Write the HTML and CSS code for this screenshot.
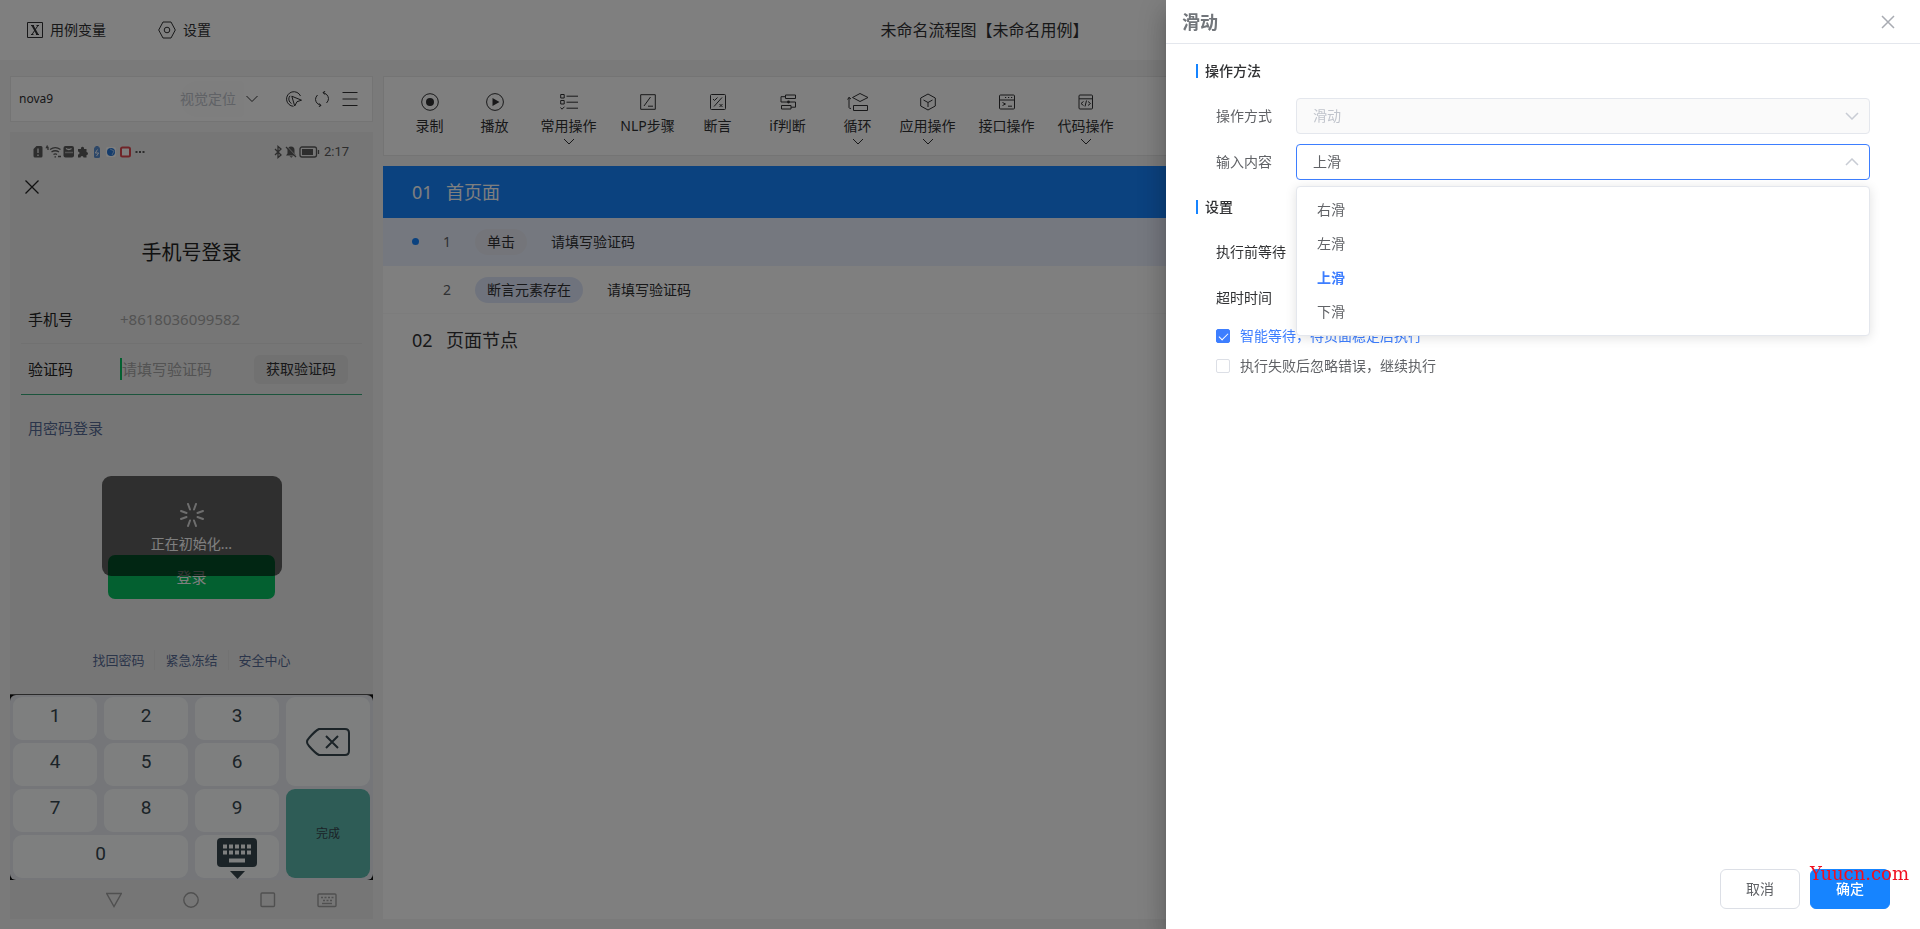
FILE: index.html
```html
<!DOCTYPE html>
<html lang="zh-CN">
<head>
<meta charset="utf-8">
<meta name="viewport" content="width=device-width, initial-scale=1">
<title>未命名流程图</title>
<link rel="stylesheet" href="styles.css">
</head>
<body>
<div class="app">
  <header class="topbar">
    <nav class="topbar-nav">
      <button class="nav-btn" type="button">
        <svg class="nav-icon nav-icon-x" viewBox="0 0 16 16"><path d="M.5.5h15v15H.5zM4 3.500h3M9.500 3.500h2.500M4 12.500h2.500M9 12.500h3M11 3.500l-6 9"/><path class="bold" d="M5.500 3.500l5 9"/></svg>
        用例变量
      </button>
      <button class="nav-btn" type="button">
        <svg class="nav-icon" viewBox="0 0 18 18"><path d="M5 1h8l4.300 8L13 17H5L.7 9z"/><circle cx="9" cy="9" r="2.800"/></svg>
        设置
      </button>
    </nav>
    <h1 class="topbar-title">未命名流程图【未命名用例】</h1>
  </header>

  <main class="workspace">
    <section class="device">
      <div class="device-bar">
        <span class="device-name">nova9</span>
        <button class="locate" type="button" disabled>视觉定位</button>
        <svg class="locate-arrow" viewBox="0 0 12 8"><path d="M.5 1L6 6.500 11.500 1"/></svg>
        <button class="bar-btn" type="button" aria-label="点选"><svg viewBox="0 0 16 16"><path d="M7.500 15.300A7.300 7.300 0 1 1 14.500 5"/><path d="M5.500 12.500A5 5 0 0 1 4 4.800"/><path d="M5.800 5.200l9.700 4-4.500 1.500-2.300 4.300z"/></svg></button>
        <button class="bar-btn" type="button" aria-label="刷新"><svg viewBox="0 0 16 16"><path d="M7 14.500Q2 13 1.500 8.500 1.500 6 3.500 4M9 1.500Q14 3 14.500 7.500 14.500 10 12.500 12"/><path d="M5 12.300l2 2.200-2.200 1.200M11 3.700L9 1.500 11.200.3"/></svg></button>
        <button class="bar-btn" type="button" aria-label="菜单"><svg viewBox="0 0 16 16"><path d="M.5 1.500h15M.5 8h15M.5 14.500h15"/></svg></button>
      </div>

      <div class="phone">
        <div class="status">
          <svg class="status-left" viewBox="0 0 112 14">
            <path class="g" d="M3.500 1H8a1.500 1.500 0 0 1 1.500 1.500v8.500A1.500 1.500 0 0 1 8 12.500H2A1.500 1.500 0 0 1 .5 11V4z"/>
            <path class="hole" d="M5 3.500V8M5 9.500V11"/>
            <path class="gs" d="M17 4.500c3.500-2.500 7-2.500 10.500 0M18.500 7c2.500-1.700 5-1.700 7.500 0M20.500 9.500c1-.8 2.500-.8 3.500 0M21.500 11.800h1.500M25 11.500h3M14.500.5l-1 2h1.500v2.500"/>
            <rect class="g" x="30.500" y="1" width="10.500" height="11.500" rx="2"/><path class="hole" d="M33 3.500q3 2 5.500 0"/><path class="hole dots" d="M32.500 7.500h7"/>
            <path class="g" d="M45 4h3a1.600 1.600 0 1 1 3 0h2.500v3a1.500 1.500 0 1 1 0 3v2.500h-3a1.500 1.500 0 0 0-3 0H45V9.500a1.500 1.500 0 0 0 0-3z"/>
            <rect class="cell" x="61" y="2" width="6" height="11" rx="1.500"/><path class="cell" d="M62.500 1h3v1h-3z"/><path class="bolt" d="M64.500 4.500L62.300 8h3.400L63.500 11"/>
            <rect class="tile" x="73" y="2" width="10" height="10" rx="2"/><circle class="dot" cx="78" cy="7" r="4"/><path class="thin" d="M77 4l4 2-2 4"/>
            <rect class="redbox" x="88" y="2.500" width="9" height="9" rx="1.500"/>
            <path class="gd" d="M102.500 7h2M106 7h2M109.500 7h2"/>
          </svg>
          <span class="status-right">
            <svg class="status-icons" viewBox="0 0 46 14">
              <path class="gs" d="M1 4l6 6-3 2.500V1.500L7 4l-6 6"/>
              <path class="g" d="M12 10.500l1.500-2V5a3.500 3.500 0 0 1 7 0v3.500l1.500 2zM15.500 11.300h3.500l-1.700 1.500z"/><path class="slit" d="M13 1.500l9.500 10"/><path class="cut" d="M12 2l10 10"/>
              <rect class="gs" x="26" y="2" width="16.500" height="10" rx="2"/><rect class="g" x="28" y="4" width="11" height="6"/><path class="gs" d="M44.500 5v4"/>
            </svg>
            2:17
          </span>
        </div>
        <button class="phone-close" type="button" aria-label="关闭"><svg viewBox="0 0 14 14"><path d="M.5.5l13 13M13.500.5l-13 13"/></svg></button>
        <h2 class="phone-title">手机号登录</h2>
        <form class="login">
          <div class="login-row">
            <label for="tel">手机号</label>
            <input id="tel" type="tel" placeholder="+8618036099582">
          </div>
          <div class="login-row login-row-active">
            <label for="code">验证码</label>
            <input id="code" class="code-input" type="text" placeholder="请填写验证码">
            <button class="get-code" type="button">获取验证码</button>
          </div>
          <a class="pwd-link" href="#">用密码登录</a>
          <div class="submit-wrap">
            <button class="login-btn" type="button">登录</button>
            <div class="toast" role="status">
              <svg class="spinner" viewBox="-12 -12 24 24"><path d="M2-5.500L4-11M5.500-2L11-4M5.500 2L11 4M2 5.500L4 11M-2 5.500L-4 11M-5.500 2L-11 4M-5.500-2L-11-4M-2-5.500L-4-11"/></svg>
              <span>正在初始化...</span>
            </div>
          </div>
        </form>
        <div class="help-links">
          <a href="#">找回密码</a><a href="#">紧急冻结</a><a href="#">安全中心</a>
        </div>
        <div class="keypad-frame">
          <div class="keypad">
            <button type="button">1</button><button type="button">2</button><button type="button">3</button>
            <button class="key-tall key-delete" type="button" aria-label="删除"><svg viewBox="0 0 44 28"><path d="M13 1h26q4 0 4 4v18q0 4-4 4H13Q9 25 3 18Q-1 14 3 10Q9 3 13 1z"/><path d="M20 8l12 12M32 8L20 20"/></svg></button>
            <button type="button">4</button><button type="button">5</button><button type="button">6</button>
            <button type="button">7</button><button type="button">8</button><button type="button">9</button>
            <button class="key-tall key-done" type="button">完成</button>
            <button class="key-wide" type="button">0</button>
            <button class="key-hide" type="button" aria-label="收起键盘"><svg viewBox="0 0 40 41"><rect width="40" height="29" rx="4"/><path d="M13 33h15l-7.500 8z"/><path class="keys" d="M6 8.500h29M6 14.500h29"/><path class="space" d="M12 22.500h16"/></svg></button>
          </div>
        </div>
        <div class="phone-nav">
          <svg viewBox="0 0 16 16"><path d="M.7 1.500h14.600L8 14.500z"/></svg>
          <svg viewBox="0 0 16 16"><circle cx="8" cy="8" r="7.200"/></svg>
          <svg viewBox="0 0 16 16"><rect x="1" y="1" width="13.500" height="13.500" rx="1"/></svg>
          <svg class="nav-kbd" viewBox="0 0 20 16"><rect x="1" y="2" width="18" height="12.500" rx="1"/><path class="dash" d="M4 5.500h12.500M6 8.500h9"/><path d="M5 11.500h10"/></svg>
        </div>
      </div>
    </section>

    <section class="flow">
      <div class="toolbar">
        <button class="tool tool-media" type="button"><svg class="tool-icon" viewBox="0 0 18 18"><circle cx="9" cy="9" r="8.300"/><circle class="fill" cx="9" cy="9" r="4"/></svg>录制</button>
        <button class="tool tool-media" type="button"><svg class="tool-icon" viewBox="0 0 18 18"><circle cx="9" cy="9" r="8.400"/><path class="fill" d="M6.500 5l7 4-7 4z"/></svg>播放</button>
        <button class="tool tool-wide" type="button"><svg class="tool-icon" viewBox="0 0 18 18"><path d="M.7 1.500h3.500V5H.7zM.7 7.500h3.500V11H.7zM.5 14.500l1.500 1.700 2.500-2.500M6.500 3.200H18M6.500 9.200H18M6.500 15.200H18"/></svg>常用操作<svg class="tool-arrow" viewBox="0 0 12 8"><path d="M1 1l5 5 5-5"/></svg></button>
        <button class="tool tool-wide" type="button"><svg class="tool-icon" viewBox="0 0 18 18"><path d="M1.700 1.700h14.600v14.600H1.700zM11.500 4l-6.500 9M9 13.200h5"/></svg>NLP步骤</button>
        <button class="tool" type="button"><svg class="tool-icon" viewBox="0 0 18 18"><rect x="1.500" y="1.500" width="15" height="15" rx="1"/><path d="M13 4.500l-8 9M4 6l1.500 1.500L8.500 4.500M10.500 11l3 3M13.500 11l-3 3"/></svg>断言</button>
        <button class="tool tool-wide" type="button"><svg class="tool-icon" viewBox="0 0 18 18"><path d="M6.500 2h10v3.500h-10zM2.500 12.500h9.500V16H2.500zM6.500 3.700H2V9h14.500v5.200H12"/><circle class="fill" cx="9.500" cy="9" r="1.400"/></svg>if判断</button>
        <button class="tool" type="button"><svg class="tool-icon tool-icon-loop" viewBox="0 0 22 18"><path d="M5.500 4.500l7.500-4 8 4-8 4zM6.500 12.500h14v5H6.500zM2 4v10.500q0 1 2 1M.5 6.500L2 4.500 4 6"/></svg>循环<svg class="tool-arrow" viewBox="0 0 12 8"><path d="M1 1l5 5 5-5"/></svg></button>
        <button class="tool tool-wide" type="button"><svg class="tool-icon" viewBox="0 0 18 18"><path d="M9 1l7.300 4v8L9 17l-7.300-4V5zM4.500 7L9 9.500 13.500 7M9 9.500V14"/></svg>应用操作<svg class="tool-arrow" viewBox="0 0 12 8"><path d="M1 1l5 5 5-5"/></svg></button>
        <button class="tool tool-wide" type="button"><svg class="tool-icon" viewBox="0 0 18 18"><rect x="1.500" y="2" width="15" height="14" rx="1"/><path d="M1.500 7h15M7 4.500h1.200M10 4.500h1.200M13 4.500h1.200M4.500 9.500L7.500 11l-3 1.500M10 13.200h4"/></svg>接口操作</button>
        <button class="tool tool-wide" type="button"><svg class="tool-icon" viewBox="0 0 18 18"><rect x="2" y="2" width="13.500" height="14" rx="1"/><path d="M2 5.800h13.500M6.500 8.500l-2.500 2 2.500 2M11 8.500l2.500 2-2.500 2M9.500 7.500l-1.500 6"/></svg>代码操作<svg class="tool-arrow" viewBox="0 0 12 8"><path d="M1 1l5 5 5-5"/></svg></button>
      </div>
      <div class="steps">
        <div class="node node-active"><span class="node-no">01</span><span>首页面</span></div>
        <div class="step step-active"><span class="marker"><i class="bullet"></i></span><span class="step-no">1</span><span class="tag tag-plain">单击</span><span>请填写验证码</span></div>
        <div class="step"><span class="marker"></span><span class="step-no">2</span><span class="tag">断言元素存在</span><span>请填写验证码</span></div>
        <div class="node"><span class="node-no">02</span><span>页面节点</span></div>
      </div>
    </section>
  </main>
</div>

<div class="mask">
  <aside class="drawer" role="dialog" aria-labelledby="drawer-title">
    <header class="drawer-head">
      <h2 id="drawer-title">滑动</h2>
      <button class="drawer-close" type="button" aria-label="关闭"><svg viewBox="0 0 14 14"><path d="M1 1l12 12M13 1L1 13"/></svg></button>
    </header>
    <form class="drawer-body">
      <h3 class="section-title">操作方法</h3>
      <div class="field">
        <label for="method">操作方式</label>
        <div class="select-box">
          <select id="method" disabled><option>滑动</option></select>
          <svg class="caret" viewBox="0 0 14 8"><path d="M1 1l6 6 6-6"/></svg>
        </div>
      </div>
      <div class="field">
        <label for="content">输入内容</label>
        <div class="select-box">
          <select id="content" class="select-open"><option>右滑</option><option>左滑</option><option selected>上滑</option><option>下滑</option></select>
          <svg class="caret" viewBox="0 0 14 8"><path d="M1 7l6-6 6 6"/></svg>
          <ul class="options" role="listbox" aria-label="输入内容">
            <li role="option">右滑</li>
            <li role="option">左滑</li>
            <li class="chosen" role="option" aria-selected="true">上滑</li>
            <li role="option">下滑</li>
          </ul>
        </div>
      </div>
      <h3 class="section-title">设置</h3>
      <div class="field field-dark">
        <label for="wait">执行前等待</label>
        <input id="wait" class="text-input" type="text">
      </div>
      <div class="field field-dark">
        <label for="timeout">超时时间</label>
        <input id="timeout" class="text-input" type="text">
      </div>
      <label class="check"><input type="checkbox" checked><span>智能等待，待页面稳定后执行</span></label>
      <label class="check"><input type="checkbox"><span>执行失败后忽略错误，继续执行</span></label>
    </form>
    <footer class="drawer-foot">
      <button class="btn" type="button">取消</button>
      <button class="btn btn-primary" type="button">确定</button>
      <span class="watermark">Yuucn.com</span>
    </footer>
  </aside>
</div>
</body>
</html>
```

FILE: styles.css
```css
* { box-sizing: border-box; }

body {
  margin: 0;
  font: 14px/20px "Noto Sans", "Noto Sans CJK SC", sans-serif;
  color: #303133;
}

h1, h2, h3, ul { margin: 0; padding: 0; font-weight: 400; list-style: none; }
button, input, select { font: inherit; color: inherit; margin: 0; }
button { border: 0; background: none; padding: 0; cursor: pointer; }
a { color: inherit; text-decoration: none; }
svg { display: block; flex: none; fill: none; stroke: currentColor; }

.app { display: flex; flex-direction: column; min-height: 100vh; background: #f5f5f5; }

/* Top bar */
.topbar {
  display: grid;
  grid-template-columns: 18fr auto 17fr;
  align-items: center;
  height: 60px;
  background: #fff;
}
.topbar-nav { display: flex; gap: 52px; padding-left: 27px; }
.nav-btn { display: flex; align-items: center; gap: 7px; }
.nav-icon { width: 18px; height: 18px; }
.nav-icon-x { width: 16px; height: 16px; }
.bold { stroke-width: 2; }
.topbar-title { font-size: 16px; line-height: 24px; }

.workspace { flex: 1; display: flex; gap: 10px; padding: 16px 10px 10px; }

/* Device */
.device { display: flex; flex-direction: column; gap: 10px; width: 363px; flex: none; }
.device-bar {
  display: flex;
  align-items: center;
  height: 46px;
  padding: 0 14px 0 8px;
  border: 1px solid #e8e8e8;
  background: #fff;
}
.device-name { flex: 1; font-size: 12px; }
.locate { height: 36px; padding-right: 8px; border-radius: 18px 4px 4px 18px; background: #fcfcfc; color: #c0c4cc; }
.locate-arrow { width: 12px; height: 8px; margin: 0 28px 0 2px; }
.bar-btn + .bar-btn { margin-left: 12px; }
.bar-btn svg { width: 16px; height: 16px; }

.phone { flex: 1; display: flex; flex-direction: column; background: #ededed; }
.status { display: flex; justify-content: space-between; align-items: center; height: 40px; padding: 0 24px 0 23px; color: #5a5a5a; }
.status-left { width: 112px; height: 14px; stroke: none; }
.status-right { display: flex; align-items: center; gap: 4px; font: 13px/20px Roboto, sans-serif; }
.status-icons { width: 46px; height: 14px; stroke: none; }
.g { fill: #5a5a5a; }
.gs { fill: none; stroke: #5a5a5a; stroke-width: 1.3; }
.gd { stroke: #5a5a5a; stroke-width: 2; }
.hole { stroke: #eee; stroke-width: 1.3; }
.dots { stroke-dasharray: 1 1; }
.bolt { stroke: #eef4ff; }
.thin { stroke: #9cc4f4; }
.slit { stroke: #ededed; }
.cut { stroke: #5a5a5a; stroke-width: 1.3; }
.cell { fill: #5a8fd0; }
.tile { fill: #fff; }
.dot { fill: #2878d8; }
.redbox { fill: #fff; stroke: #e04850; stroke-width: 2; }

.phone-close { align-self: flex-start; margin: 8px 15px; color: #222; }
.phone-close svg { width: 14px; height: 14px; stroke-width: 1.3; }
.phone-title { margin-top: 37px; text-align: center; font-size: 20px; line-height: 28px; color: #222; }

.login { padding: 0 11px; margin-top: 27px; font-size: 15px; }
.login-row { display: flex; align-items: center; height: 50px; padding: 0 14px 0 7px; border-bottom: 1px solid #e2e2e2; }
.login-row-active { height: 51px; border-color: #36a878; }
.login-row label { width: 92px; color: #222; }
.login-row input { flex: 1; min-width: 0; height: 22px; padding: 0; border: 0; outline: 0; background: none; }
.login-row input::placeholder { color: #a6a6a6; }
.login-row .code-input { border-left: 2px solid #07c160; }
.get-code { height: 29px; padding: 0 12px; border-radius: 6px; background: #e2e2e2; font-size: 14px; }
.pwd-link { display: block; padding: 23px 7px 0; color: #576b95; }
.submit-wrap { position: relative; display: flex; justify-content: center; margin-top: 117px; }
.login-btn { width: 167px; height: 44px; border-radius: 7px; background: #07c160; color: #fff; }
.toast {
  position: absolute;
  bottom: 23px;
  left: 50%;
  width: 180px;
  height: 100px;
  margin-left: -90px;
  padding: 27px 0 0;
  border-radius: 9px;
  background: rgba(0, 0, 0, .6);
  color: #fff;
  font-size: 14px;
  text-align: center;
}
.spinner { width: 24px; height: 24px; margin: 0 auto 7px; stroke: #ddd; stroke-width: 2; stroke-linecap: round; }

.help-links { display: flex; justify-content: center; margin-top: 51px; color: #576b95; font-size: 13px; }
.help-links a { padding: 0 10px; }
.help-links a + a { border-left: 1px solid #e4e4e4; }

.keypad-frame { margin-top: auto; border-top: 1px solid #555; background: #111; }
.keypad {
  display: grid;
  grid-template-columns: repeat(4, 1fr);
  grid-auto-rows: 43px;
  gap: 3px 7px;
  padding: 2px 3px;
  border-radius: 6px;
  background: #eaecf2;
}
.keypad button { padding-bottom: 6px; border-radius: 9px; background: #fcffff; color: #37474f; font: 19px/24px Roboto, "Noto Sans CJK SC", sans-serif; }
.keypad .key-tall { grid-column: 4; grid-row: span 2; display: grid; place-items: center; padding: 0; }
.key-delete svg { width: 44px; height: 28px; stroke-width: 2; }
.keypad .key-done { background: #5cb8ac; font-size: 12px; }
.key-wide { grid-column: span 2; }
.keypad .key-hide { display: grid; place-items: center; padding: 3px 0 0; }
.key-hide svg { width: 40px; height: 41px; fill: currentColor; stroke: none; }
.keys { stroke: #fcffff; stroke-width: 4; stroke-dasharray: 4 2; }
.space { stroke: #fcffff; stroke-width: 4; }

.phone-nav { display: flex; align-items: center; gap: 61px; height: 39px; padding-left: 96px; color: #a0a0a0; }
.phone-nav svg { width: 16px; height: 16px; stroke-width: 1.4; }
.phone-nav .nav-kbd { width: 20px; margin-left: -20px; }
.dash { stroke-dasharray: 2 1.500; }

/* Flow */
.flow { flex: 1; min-width: 0; display: flex; flex-direction: column; gap: 10px; }
.toolbar { display: flex; height: 80px; padding: 16px 15px 0; border: 1px solid #e8e8e8; background: #fff; overflow: hidden; }
.tool { display: flex; flex-direction: column; align-items: center; width: 61px; flex: none; }
.tool-wide { width: 79px; }
.tool-media { margin-right: 4px; }
.tool-icon { width: 18px; height: 18px; margin-bottom: 5px; }
.tool-icon-loop { width: 22px; }
.tool-icon .fill { fill: currentColor; stroke: none; }
.tool-arrow { width: 12px; height: 8px; margin-top: 2px; }

.steps { flex: 1; background: #fff; }
.node { display: flex; align-items: center; height: 52px; padding-left: 29px; font-size: 18px; }
.node-no { width: 34px; }
.node-active { background: #1684ff; color: #fff; }
.step { display: flex; align-items: center; height: 48px; padding-left: 29px; border-bottom: 1px solid #f8f8f8; }
.step-active { background: #ebf0ff; border-color: #ebf0ff; }
.marker { width: 29px; }
.bullet { display: block; width: 7px; height: 7px; border-radius: 50%; background: #1684ff; }
.step-no { width: 12px; margin-right: 22px; text-align: center; color: #606266; }
.tag { height: 26px; margin-right: 24px; padding: 0 12px; border-radius: 13px; background: #dfe7fb; line-height: 26px; }
.tag-plain { background: #e8ebf4; }

/* Drawer */
.mask { position: fixed; inset: 0; display: flex; justify-content: flex-end; background: rgba(0, 0, 0, .5); }
.drawer {
  display: flex;
  flex-direction: column;
  width: 754px;
  max-width: 100%;
  background: #fff;
  color: #606266;
  box-shadow: 0 8px 10px -5px rgba(0, 0, 0, .2), 0 16px 24px 2px rgba(0, 0, 0, .14), 0 6px 30px 5px rgba(0, 0, 0, .12);
}
.drawer-head { display: flex; justify-content: space-between; align-items: center; height: 44px; padding: 0 25px 0 16px; border-bottom: 1px solid #e4e7ed; }
.drawer-head h2 { font-size: 18px; line-height: 24px; font-weight: 700; color: #72767b; }
.drawer-close svg { width: 14px; height: 14px; color: #a8abb2; stroke-width: 1.5; }

.drawer-body { flex: 1; padding: 17px 50px 0 30px; }
.section-title { display: flex; align-items: center; gap: 7px; font-size: 14px; font-weight: 500; color: #303133; }
.section-title::before { content: ""; width: 2px; height: 14px; background: #1684ff; }
.section-title + .field { margin-top: 17px; }
.field { display: flex; align-items: center; margin-bottom: 10px; padding-left: 20px; }
.field + .section-title { margin-top: 17px; }
.field label { width: 80px; flex: none; }
.field-dark label { color: #303133; }
.select-box { position: relative; flex: 1; }
.select-box select, .text-input {
  display: block;
  width: 100%;
  height: 36px;
  padding: 0 16px;
  border: 1px solid #e4e7ed;
  border-radius: 4px;
  background: #fff;
  appearance: none;
  outline: 0;
}
.select-box select:disabled { background: #fafafa; color: #c0c4cc; opacity: 1; }
.select-box .select-open { border-color: #3d7eff; }
.text-input { flex: 1; }
.caret { position: absolute; top: 14px; right: 11px; width: 14px; height: 8px; stroke: #c8ccd4; stroke-width: 1.5; pointer-events: none; }
.options {
  position: absolute;
  z-index: 1;
  top: 42px;
  left: 0;
  right: 0;
  padding: 6px 0;
  border: 1px solid #e4e7ed;
  border-radius: 4px;
  background: #fff;
  box-shadow: 0 2px 12px rgba(0, 0, 0, .12);
}
.options li { padding: 0 20px; line-height: 34px; }
.options .chosen { color: #3d7eff; font-weight: 700; }

.check { display: flex; align-items: center; gap: 10px; height: 20px; margin: 0 0 10px 20px; }
.check input { appearance: none; width: 14px; height: 14px; border: 1px solid #dcdfe6; border-radius: 2px; display: grid; place-items: center; }
.check input:checked { border-color: #3d7eff; background: #3d7eff; }
.check input:checked::before { content: ""; width: 4px; height: 8px; margin-bottom: 2px; border: solid #fff; border-width: 0 1px 1px 0; transform: rotate(45deg); }
.check input:checked + span { color: #3d7eff; }

.drawer-foot { position: relative; display: flex; justify-content: flex-end; gap: 10px; padding: 20px 30px; }
.btn { width: 80px; height: 40px; border: 1px solid #dcdfe6; border-radius: 6px; }
.btn-primary { border-color: #1684ff; background: #1684ff; color: #fff; font-weight: 500; }
.watermark { position: absolute; top: 15px; right: 11px; color: #f01020; font: 18px/20px "DejaVu Serif", serif; }
```
